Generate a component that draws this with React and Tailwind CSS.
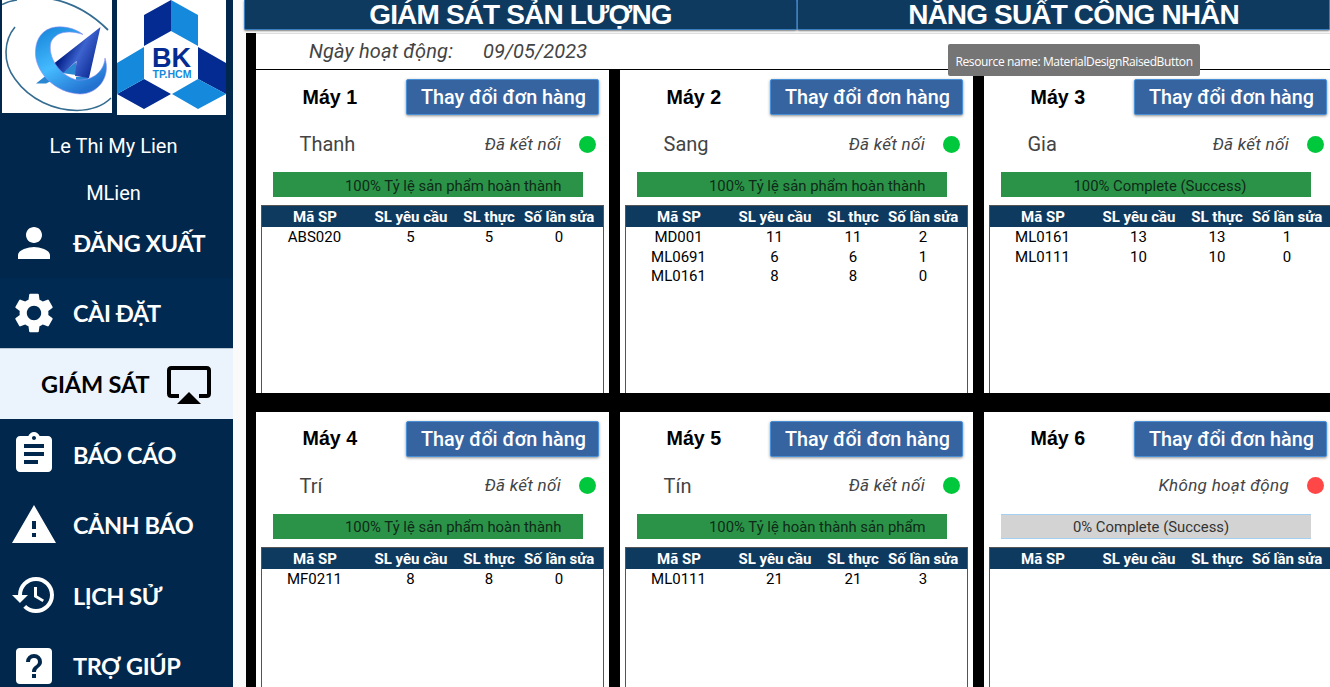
import React from "react";
import { MdPerson, MdSettings, MdAssignment, MdWarning, MdHistory } from "react-icons/md";

const machines = [
  { name: "Máy 1", worker: "Thanh", bar: "100% Tỷ lệ sản phẩm hoàn thành", vi: true, rows: [["ABS020", 5, 5, 0]] },
  { name: "Máy 2", worker: "Sang", bar: "100% Tỷ lệ sản phẩm hoàn thành", vi: true, rows: [["MD001", 11, 11, 2], ["ML0691", 6, 6, 1], ["ML0161", 8, 8, 0]] },
  { name: "Máy 3", worker: "Gia", bar: "100% Complete (Success)", rows: [["ML0161", 13, 13, 1], ["ML0111", 10, 10, 0]] },
  { name: "Máy 4", worker: "Trí", bar: "100% Tỷ lệ sản phẩm hoàn thành", vi: true, rows: [["MF0211", 8, 8, 0]] },
  { name: "Máy 5", worker: "Tín", bar: "100% Tỷ lệ hoàn thành sản phẩm", vi: true, rows: [["ML0111", 21, 21, 3]] },
  { name: "Máy 6", worker: "", bar: "0% Complete (Success)", off: true, rows: [] },
];

function barClass(m) {
  const tone = m.off ? "border-y border-[#a6d0f2] bg-[#d3d3d3] text-[#333] justify-center pr-[10px]" : "bg-[#2b9348] text-[#0f2a17]";
  if (m.off) return tone;
  return tone + (m.vi ? " justify-end pr-[21.5px]" : " justify-center pl-[8px]");
}

function Machine({ m }) {
  return (
    <section className="flex h-full flex-col overflow-hidden bg-white">
      <div className="flex h-[54px] shrink-0 items-center pl-[46.5px]">
        <h2 className="w-[103.5px] pt-px font-['Liberation_Sans',sans-serif] text-[19.7px] font-bold text-black">{m.name}</h2>
        <button className="h-[36px] w-[193px] rounded-[2px] border border-[#4a90d9] bg-[#3664a0] pt-[2px] pl-0.5 text-[19.8px] font-medium whitespace-nowrap text-white shadow-[0_1px_3px_rgba(0,0,0,0.45)]">Thay đổi đơn hàng</button>
      </div>
      <div className="flex h-[40px] shrink-0 items-center pl-[43.5px] pr-[13px] text-[#444]">
        <span className="text-[20px]">{m.worker}</span>
        <span className="ml-auto pt-px text-[17px] tracking-[0.3px] italic">{m.off ? "Không hoạt động" : "Đã kết nối"}</span>
        <span className={"ml-[18px] size-[17px] rounded-full " + (m.off ? "bg-[#ff4747]" : "bg-[#00c83c]")} />
      </div>
      <div className={"mt-[8px] ml-[17px] flex h-[25px] w-[310px] shrink-0 items-center pt-[3px] text-[14.85px] " + barClass(m)}>
        {m.bar}
      </div>
      <div className="mt-[8px] ml-[5px] flex w-[343px] flex-1 flex-col border-x border-t border-[#555] text-[15px]">
        <div className="grid h-[21px] shrink-0 grid-cols-[106px_86px_70px_70px] items-center bg-[#0f3a5f] text-center font-bold whitespace-nowrap text-white">
          <span>Mã SP</span><span>SL yêu cầu</span><span>SL thực</span><span>Số lần sửa</span>
        </div>
        <div className="-mt-px flex flex-col">
          {m.rows.map((r) => (
            <div key={r[0]} className="grid h-[19.5px] shrink-0 grid-cols-[105px_87px_70px_70px] items-center text-center text-black">
              {r.map((c, i) => <span key={i}>{c}</span>)}
            </div>
          ))}
        </div>
      </div>
    </section>
  );
}

function NavItem({ children, label, first }) {
  return (
    <div className={"flex items-center " + (first ? "h-[70px]" : "h-[70.5px]")}>
      <span className="flex w-[73px] shrink-0 pl-[10px] text-white">{children}</span>
      <span className="pt-[2px] text-[23.5px] font-bold tracking-[-0.45px] whitespace-nowrap">{label}</span>
    </div>
  );
}

function CompanyLogo() {
  return (
    <svg viewBox="0 0 110 112.500" className="h-[112.5px] w-[110px] bg-white">
      <defs>
        <linearGradient id="ring" x1="0" y1="0" x2="0.6" y2="1"><stop stopColor="#1380d6" /><stop offset=".55" stopColor="#45bbff" /><stop offset="1" stopColor="#2372d0" /></linearGradient>
        <linearGradient id="blade" x1="0.1" y1="0.2" x2="1" y2="0.7"><stop offset=".25" stopColor="#031f86" /><stop offset=".55" stopColor="#3d63cf" /><stop offset="1" stopColor="#0a2790" /></linearGradient>
      </defs>
      <g fill="none" stroke="#346c91">
        <path d="M0 4.500Q7 1 15 0" strokeWidth="1.500" />
        <path d="M50 -1C70 3 90 14 106 30" strokeWidth="1.800" />
        <path d="M13 27C2 40 0 62 13 79C28 100 52 110 75 110.500C90 110 102 105 109 98" strokeWidth="1.600" />
      </g>
      <path d="M34 83.500L46 74L55 78L44 83.500ZM60 73L74 62V75ZM74 77H86V82H74Z" fill="#2a87d2" />
      <path d="M98.500 27L50 65L60 74L74.500 61L73 76L87 78Z" fill="url(#blade)" />
      <path d="M81 34.500C73 28 60 25 49 28C37 32 33 43 33.500 55C35 74 54 93 78 94C96 94 109 77 103 58C102 72 90 81 75 80C58 76 45 57 49 42C54 31 68 30 81 34.500Z" fill="url(#ring)" stroke="#8f8ff5" strokeWidth="0.600" />
    </svg>
  );
}

function SchoolLogo() {
  return (
    <svg viewBox="0 0 109 115" className="h-[115px] w-[109px] bg-white">
      <path d="M54 0L27 15V46L54 31ZM81 47L109 63V94L81 79ZM27 79L54 94L27 109L0 94Z" fill="#032b91" />
      <path d="M54 0L81 15V46L54 31ZM27 47L0 63V94L27 79ZM81 79L109 94L81 109L55 94Z" fill="#158adc" />
      <text x="54.500" y="66.500" textAnchor="middle" textLength="39" lengthAdjust="spacingAndGlyphs" className="fill-[#032b91] font-['Liberation_Sans',sans-serif] text-[28px] font-bold">BK</text>
      <text x="55" y="78" textAnchor="middle" textLength="39" lengthAdjust="spacingAndGlyphs" className="fill-[#158adc] font-['Liberation_Sans',sans-serif] text-[11px] font-bold">TP.HCM</text>
    </svg>
  );
}

function HelpBox() {
  return (
    <svg viewBox="0 0 24 24" className="size-[48px]" fill="currentColor">
      <path d="M11 18H13V16H11V18M12 6A4 4 0 0 0 8 10H10A2 2 0 0 1 12 8A2 2 0 0 1 14 10C14 12 11 11.750 11 15H13C13 12.750 16 12.500 16 10A4 4 0 0 0 12 6M5 3H19A2 2 0 0 1 21 5V19A2 2 0 0 1 19 21H5A2 2 0 0 1 3 19V5A2 2 0 0 1 5 3" fillRule="evenodd" />
    </svg>
  );
}

export default function App() {
  return (
    <div className="flex h-[687px] w-[1330px] overflow-hidden bg-[#fafafa] font-[Roboto,sans-serif]">
      <aside className="flex w-[233px] shrink-0 flex-col bg-[#01284c] text-white">
        <div className="flex h-[122px] shrink-0 gap-[5px] pl-[2px]"><CompanyLogo /><SchoolLogo /></div>
        <div className="flex h-[47px] shrink-0 items-center justify-center pr-[6px] text-[20px]">Le Thi My Lien</div>
        <div className="flex h-[47px] shrink-0 items-center justify-center pr-[6px] text-[20px]">MLien</div>
        <nav className="-mt-[8px] font-[Lato,'Noto_Sans',sans-serif]">
          <NavItem first label="ĐĂNG XUẤT"><MdPerson size={48} /></NavItem>
          <div className="bg-[#002a52]"><NavItem first label="CÀI ĐẶT"><MdSettings size={48} /></NavItem></div>
          <div className="flex h-[71px] items-center border-t border-[#b9c6d4] bg-[#ebf3fc] pl-[41px] text-black">
            <span className="w-[126px] pt-[2px] text-[23.5px] font-bold tracking-[-0.15px] whitespace-nowrap">GIÁM SÁT</span>
            <svg viewBox="0 0 44 38" className="mt-px h-[38px] w-[44px]"><path d="M12 30H4.500Q2 30 2 27.500V4.500Q2 2 4.500 2H39.500Q42 2 42 4.500V27.500Q42 30 39.500 30H32" fill="none" stroke="currentColor" strokeWidth="4" /><path d="M10 38L22 26L34 38Z" fill="currentColor" /></svg>
          </div>
          <NavItem label="BÁO CÁO"><MdAssignment size={48} /></NavItem>
          <NavItem label="CẢNH BÁO"><MdWarning size={48} /></NavItem>
          <NavItem label="LỊCH SỬ"><MdHistory size={48} /></NavItem>
          <NavItem label="TRỢ GIÚP"><HelpBox /></NavItem>
        </nav>
      </aside>
      <main className="flex min-w-0 flex-1 flex-col pl-[11px]">
        <div className="flex h-[33px] shrink-0 font-['Liberation_Sans',sans-serif] text-[28px] leading-[29px] font-bold tracking-[-0.85px] text-white">
          <div className="h-[30px] w-[553px] rounded-b-[2px] border border-t-0 border-[#3a7fc0] bg-[#0f3a5f] text-center shadow-[0_1px_2px_rgba(0,0,0,0.5)]">GIÁM SÁT SẢN LƯỢNG</div>
          <div className="h-[30px] flex-1 rounded-b-[2px] border border-t-0 border-[#3a7fc0] bg-[#0f3a5f] pl-[20px] text-center shadow-[0_1px_2px_rgba(0,0,0,0.5)]">NĂNG SUẤT CÔNG NHÂN</div>
        </div>
        <div className="ml-[2px] flex flex-1 flex-col bg-black pl-[10px]">
          <div className="flex h-[36px] shrink-0 items-center border-t border-[#dedede] bg-white pb-[2px] pl-[53px] text-[20px] text-[#444] italic">
            <span className="w-[174px] tracking-[0.15px]">Ngày hoạt động:</span><span className="tracking-[0.1px]">09/05/2023</span>
          </div>
          <div className="mt-px grid grid-cols-[353px_353px_353px] grid-rows-[323px_323px] gap-x-[11px] gap-y-[18.5px]">
            {machines.map((m) => <Machine key={m.name} m={m} />)}
          </div>
        </div>
      </main>
      <div className="absolute top-[44px] left-[948px] flex h-[32px] w-[252px] items-center justify-center rounded-[2px] bg-[#757575] pt-[3px] font-['Open_Sans',sans-serif] text-[12px] tracking-[-0.37px] whitespace-nowrap text-white">Resource name: MaterialDesignRaisedButton</div>
    </div>
  );
}
